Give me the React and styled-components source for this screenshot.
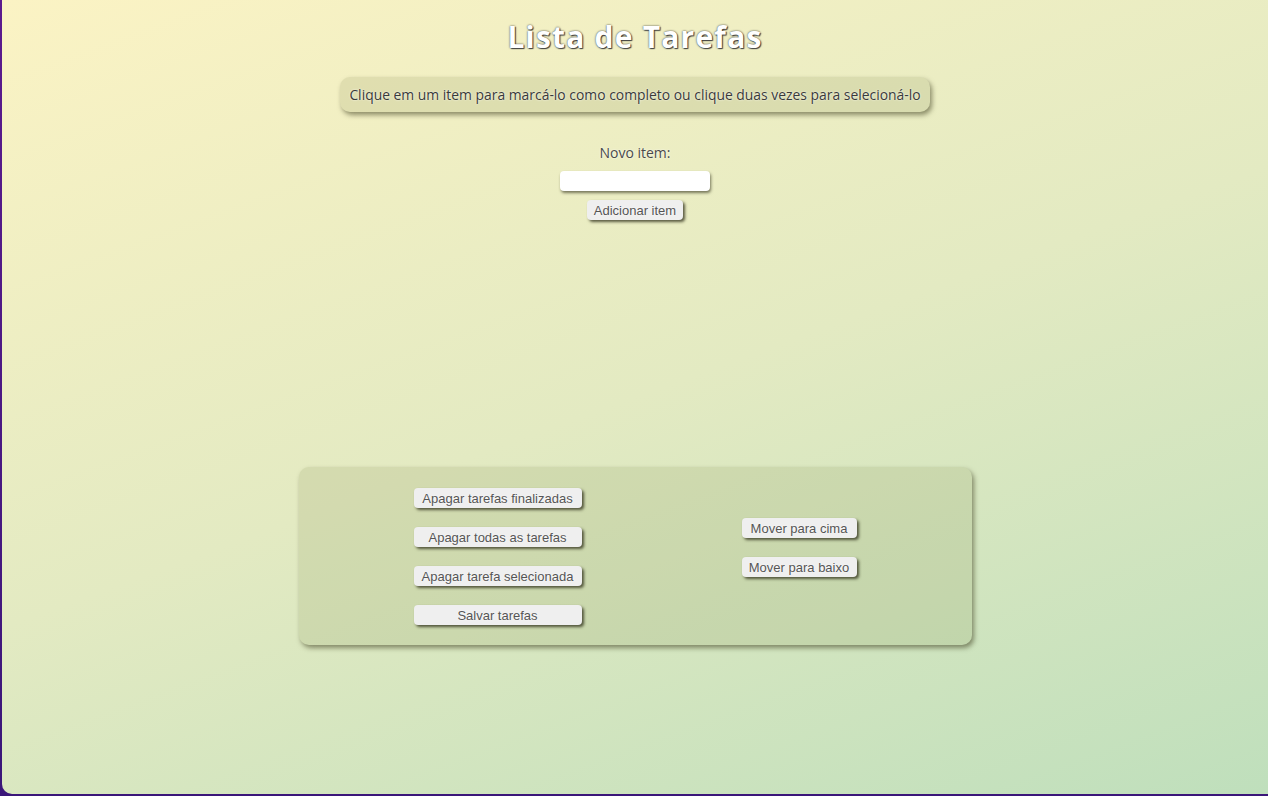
import React, { useState } from "react"
import styled, { createGlobalStyle } from "styled-components"

const GlobalStyle = createGlobalStyle`
   html, body {
      margin: 0;
      height: 100%;
   }
   body {
      background: linear-gradient(180deg, #5c1a8e 0%, #3a1679 100%);
      font-family: "Open Sans", "Liberation Sans", sans-serif;
      overflow: hidden;
   }
   #root {
      height: 100%;
   }
`

const Page = styled.div`
   box-sizing: border-box;
   height: 794px;
   margin-left: 2px;
   border-bottom-left-radius: 10px;
   background: linear-gradient(160deg, #fbf3c4 0%, #e3eac2 50%, #bfdfbc 100%);
   display: flex;
   flex-direction: column;
   align-items: center;
   padding-top: 16px;
`

const Title = styled.h1`
   margin: 0;
   font-family: "Open Sans", sans-serif;
   font-size: 30px;
   font-weight: 700;
   color: #ffffff;
   letter-spacing: 1.2px;
   text-shadow: 0 0 2px #333, 1px 1px 1px #444;
`

const Hint = styled.p`
   margin: 20px 0 0;
   padding: 8px 9px;
   border-radius: 10px;
   background: rgba(140, 145, 90, 0.18);
   box-shadow: 2px 3px 5px rgba(60, 60, 30, 0.55);
   font-size: 13.9px;
   color: #3a3a3a;
   text-shadow: 0 0 2px #ffffff;
`

const NewItem = styled.form`
   margin-top: 32px;
   display: flex;
   flex-direction: column;
   align-items: center;
   gap: 9px;
`

const Label = styled.label`
   font-size: 14px;
   color: #4a4a4a;
   text-shadow: 0 0 2px #ffffff;
   line-height: 18px;
`

const Input = styled.input`
   box-sizing: border-box;
   width: 150px;
   height: 20px;
   border: none;
   border-radius: 4px;
   background: #ffffff;
   box-shadow: 1px 2px 3px rgba(40, 40, 20, 0.6);
   outline: none;
`

const Button = styled.button`
   box-sizing: border-box;
   width: ${(p) => (p.$width ? `${p.$width}px` : "auto")};
   height: 20px;
   padding: 0 7px;
   border: none;
   border-radius: 4px;
   background: #efefef;
   box-shadow: 2px 2px 3px rgba(40, 40, 20, 0.75);
   font-family: "Liberation Sans", Arial, sans-serif;
   font-size: 13px;
   color: #555;
   text-shadow: 0 0 2px #ffffff;
   cursor: pointer;
`

const List = styled.ul`
   margin: 0;
   padding: 0;
   list-style: none;
   height: 247px;
`

const Panel = styled.div`
   box-sizing: border-box;
   width: 673px;
   padding: 21px 115px 20px;
   border-radius: 10px;
   background: rgba(140, 150, 90, 0.18);
   box-shadow: 2px 3px 5px rgba(60, 60, 30, 0.55);
   display: flex;
   justify-content: space-between;
   align-items: center;
`

const Column = styled.div`
   display: flex;
   flex-direction: column;
   gap: 19px;
   padding-bottom: ${(p) => p.$lift || 0}px;
`

const App = () => {
   const [text, setText] = useState("")

   return (
      <>
         <GlobalStyle />
         <Page>
            <Title>Lista de Tarefas</Title>
            <Hint>Clique em um item para marcá-lo como completo ou clique duas vezes para selecioná-lo</Hint>
            <NewItem onSubmit={(e) => e.preventDefault()}>
               <Label htmlFor="novo">Novo item:</Label>
               <Input id="novo" value={text} onChange={(e) => setText(e.target.value)} />
               <Button type="submit">Adicionar item</Button>
            </NewItem>
            <List />
            <Panel>
               <Column>
                  <Button $width={168}>Apagar tarefas finalizadas</Button>
                  <Button $width={168}>Apagar todas as tarefas</Button>
                  <Button $width={168}>Apagar tarefa selecionada</Button>
                  <Button $width={168}>Salvar tarefas</Button>
               </Column>
               <Column $lift={18}>
                  <Button $width={115}>Mover para cima</Button>
                  <Button $width={115}>Mover para baixo</Button>
               </Column>
            </Panel>
         </Page>
      </>
   )
}

export default App
